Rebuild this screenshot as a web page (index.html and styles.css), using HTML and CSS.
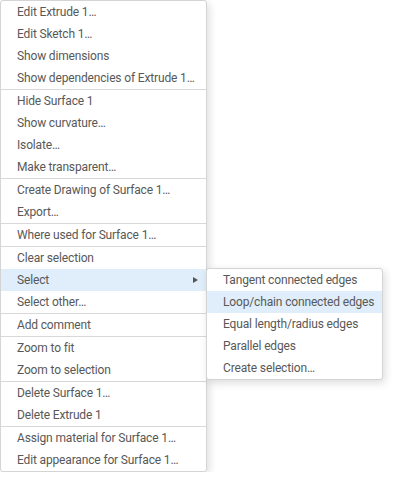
FILE: index.html
```html
<!DOCTYPE html>
<html>
<head>
<meta charset="utf-8">
<link rel="stylesheet" href="styles.css">
</head>
<body>
<div class="menu">
  <div class="group">
    <div class="item">Edit Extrude 1…</div>
    <div class="item">Edit Sketch 1…</div>
    <div class="item">Show dimensions</div>
    <div class="item">Show dependencies of Extrude 1…</div>
  </div>
  <div class="group">
    <div class="item">Hide Surface 1</div>
    <div class="item">Show curvature…</div>
    <div class="item">Isolate…</div>
    <div class="item">Make transparent…</div>
  </div>
  <div class="group">
    <div class="item">Create Drawing of Surface 1…</div>
    <div class="item">Export…</div>
  </div>
  <div class="group">
    <div class="item">Where used for Surface 1…</div>
  </div>
  <div class="group">
    <div class="item">Clear selection</div>
    <div class="item has-sub active">Select<span class="arrow"></span>
      <div class="submenu">
        <div class="item">Tangent connected edges</div>
        <div class="item active">Loop/chain connected edges</div>
        <div class="item">Equal length/radius edges</div>
        <div class="item">Parallel edges</div>
        <div class="item">Create selection…</div>
      </div>
    </div>
    <div class="item">Select other…</div>
  </div>
  <div class="group">
    <div class="item">Add comment</div>
  </div>
  <div class="group">
    <div class="item">Zoom to fit</div>
    <div class="item">Zoom to selection</div>
  </div>
  <div class="group">
    <div class="item">Delete Surface 1…</div>
    <div class="item">Delete Extrude 1</div>
  </div>
  <div class="group">
    <div class="item">Assign material for Surface 1…</div>
    <div class="item">Edit appearance for Surface 1…</div>
  </div>
</div>
</body>
</html>
```
FILE: styles.css
```css
html, body {
  margin: 0;
  padding: 0;
  background: #ffffff;
}
body {
  font-family: Roboto, "Liberation Sans", sans-serif;
  font-size: 12px;
  letter-spacing: -0.15px;
  color: #585858;
}
.menu {
  width: 207px;
  box-sizing: border-box;
  border: 1px solid #d4d4d4;
  border-radius: 3px;
  background: #fff;
  box-shadow: 2px 3px 8px rgba(0, 0, 0, 0.14);
}
.group + .group {
  border-top: 1px solid #d8d8d8;
}
.item {
  height: 22px;
  line-height: 22px;
  padding-left: 16px;
  white-space: nowrap;
  position: relative;
}
.item.active {
  background: #dfeefa;
}
.arrow {
  position: absolute;
  right: 8px;
  top: 8px;
  width: 0;
  height: 0;
  border-left: 5px solid #555;
  border-top: 3px solid transparent;
  border-bottom: 3px solid transparent;
}
.submenu {
  position: absolute;
  left: 205px;
  top: -1px;
  width: 177px;
  box-sizing: border-box;
  border: 1px solid #d4d4d4;
  border-radius: 3px;
  background: #fff;
  box-shadow: 2px 3px 8px rgba(0, 0, 0, 0.14);
  z-index: 2;
}
```
